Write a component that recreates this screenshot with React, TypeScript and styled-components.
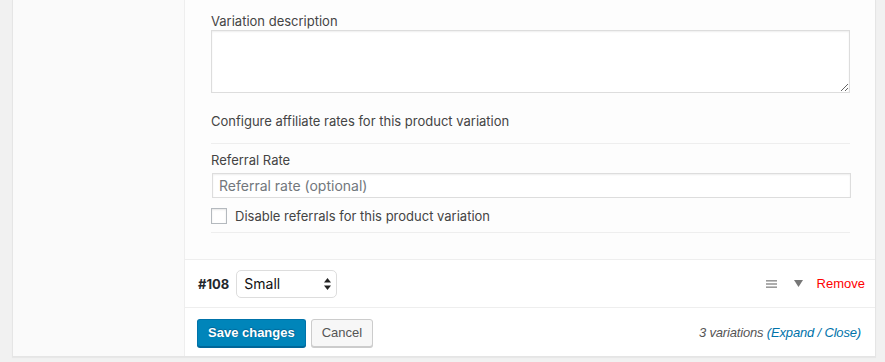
import styled, { createGlobalStyle } from "styled-components";

const GlobalStyle = createGlobalStyle`
  html, body {
    margin: 0;
    padding: 0;
    background: #f1f1f1;
  }
  body {
    font-family: Inter, "Liberation Sans", Arial, sans-serif;
    font-size: 13px;
    color: #444;
  }
  * {
    box-sizing: border-box;
  }
`;

const Page = styled.div`
  padding: 0 9px 6px 12px;
`;

const Panel = styled.div`
  display: flex;
  background: #fff;
  border: 1px solid #e5e5e5;
  border-top: none;
  box-shadow: 0 1px 1px rgba(0, 0, 0, 0.04);
`;

// left tab column of the product data box
const Sidebar = styled.div`
  width: 172px;
  flex-shrink: 0;
  background: #fafafa;
  border-right: 1px solid #eee;
`;

const Main = styled.div`
  flex: 1;
  display: flex;
  flex-direction: column;
`;

const VariationBody = styled.div`
  background: #fdfdfd;
  padding: 11px 25px 26px 26px;
  border-bottom: 1px solid #eee;
  display: flex;
  flex-direction: column;
`;

const FieldLabel = styled.div<{ $top?: number }>`
  line-height: 18px;
  padding-top: 1px;
  margin-top: ${(p) => p.$top ?? 0}px;
  margin-bottom: -1px;
  color: #444;
`;

const Description = styled.textarea`
  display: block;
  width: 100%;
  height: 63px;
  margin-top: 1px;
  border: 1px solid #ddd;
  box-shadow: inset 0 1px 2px rgba(0, 0, 0, 0.07);
  background: #fff;
  font-family: inherit;
  font-size: 14px;
  padding: 4px 6px;
  resize: both;
  outline: none;
`;

const Divider = styled.div<{ $top: number }>`
  height: 1px;
  background: #eee;
  margin-top: ${(p) => p.$top}px;
`;

const RateInput = styled.input`
  display: block;
  width: 100%;
  height: 25px;
  margin: 5px 0 0 1px;
  border: 1px solid #ddd;
  box-shadow: inset 0 1px 2px rgba(0, 0, 0, 0.07);
  background: #fff;
  font-family: inherit;
  font-size: 14px;
  padding: 0 6px;
  color: #32373c;
  outline: none;

  &::placeholder {
    color: #72777c;
  }
`;

const CheckRow = styled.label`
  display: flex;
  align-items: center;
  gap: 8px;
  margin-top: 10px;
  height: 16px;
  line-height: 16px;
  color: #444;
`;

const Check = styled.input`
  appearance: none;
  width: 16px;
  height: 16px;
  margin: 0;
  border: 1px solid #b4b9be;
  background: #fff;
  box-shadow: inset 0 1px 2px rgba(0, 0, 0, 0.1);
  flex-shrink: 0;
`;

const HeaderRow = styled.div`
  height: 48px;
  display: flex;
  align-items: center;
  padding: 0 10px 0 13px;
  background: #fff;
  border-bottom: 1px solid #eee;
`;

const Sku = styled.strong`
  font-weight: bold;
  color: #23282d;
  margin-right: 7px;
`;

const SelectWrap = styled.div`
  position: relative;
  width: 101px;
  height: 28px;
`;

const SizeSelect = styled.select`
  appearance: none;
  width: 100%;
  height: 100%;
  border: 1px solid #ddd;
  border-radius: 5px;
  background: #fff;
  font-family: inherit;
  font-size: 14px;
  color: #111;
  padding: 0 20px 0 7px;
  outline: none;
`;

const SelectArrows = styled.svg`
  position: absolute;
  right: 6px;
  top: 8px;
  pointer-events: none;
`;

const Spacer = styled.div`
  flex: 1;
`;

const Handle = styled.svg`
  margin-right: 17px;
`;

const Toggle = styled.svg`
  margin-right: 14px;
`;

const RemoveLink = styled.a`
  font-family: "Liberation Sans", Arial, sans-serif;
  color: #f00;
  text-decoration: none;
  cursor: pointer;
`;

const Footer = styled.div`
  height: 48px;
  display: flex;
  align-items: center;
  padding: 1px 14px 0 12px;
  background: #fff;
`;

const Button = styled.button<{ $primary?: boolean }>`
  height: 28px;
  padding: 0 10px;
  margin-right: 5px;
  border-radius: 3px;
  font-family: "Liberation Sans", Arial, sans-serif;
  font-size: 13px;
  cursor: pointer;
  border: 1px solid ${(p) => (p.$primary ? "#0073aa" : "#ccc")};
  border-bottom-color: ${(p) => (p.$primary ? "#006799" : "#ccc")};
  background: ${(p) => (p.$primary ? "#0085ba" : "#f7f7f7")};
  color: ${(p) => (p.$primary ? "#fff" : "#555")};
  font-weight: ${(p) => (p.$primary ? "bold" : "normal")};
  box-shadow: 0 1px 0 ${(p) => (p.$primary ? "#006799" : "#ccc")};
  text-shadow: ${(p) =>
    p.$primary ? "0 -1px 1px #006799, 1px 0 1px #006799" : "none"};
`;

const Count = styled.div`
  margin-left: auto;
  font-family: "Liberation Sans", Arial, sans-serif;
  font-style: italic;
  letter-spacing: -0.17px;
  color: #555;
`;

const CountLinks = styled.span`
  color: #0073aa;

  a {
    color: #0073aa;
    text-decoration: none;
  }
`;

const App = () => {
  return (
    <>
      <GlobalStyle />
      <Page>
        <Panel>
          <Sidebar />
          <Main>
            <VariationBody>
              <FieldLabel>Variation description</FieldLabel>
              <Description />
              <FieldLabel $top={18}>
                Configure affiliate rates for this product variation
              </FieldLabel>
              <Divider $top={14} />
              <FieldLabel $top={6}>Referral Rate</FieldLabel>
              <RateInput placeholder="Referral rate (optional)" />
              <CheckRow>
                <Check type="checkbox" />
                Disable referrals for this product variation
              </CheckRow>
              <Divider $top={8} />
            </VariationBody>

            <HeaderRow>
              <Sku>#108</Sku>
              <SelectWrap>
                <SizeSelect defaultValue="small">
                  <option value="small">Small</option>
                  <option value="medium">Medium</option>
                  <option value="large">Large</option>
                </SizeSelect>
                <SelectArrows width="7" height="12" viewBox="0 0 7 12">
                  <path d="M3.5 0 L7 4.5 L0 4.5 Z" fill="#222" />
                  <path d="M0 7.5 L7 7.5 L3.5 12 Z" fill="#222" />
                </SelectArrows>
              </SelectWrap>
              <Spacer />
              <Handle width="11" height="8" viewBox="0 0 11 8">
                <rect x="0" y="0" width="11" height="1.6" fill="#9a9a9a" />
                <rect x="0" y="3.2" width="11" height="1.6" fill="#9a9a9a" />
                <rect x="0" y="6.4" width="11" height="1.6" fill="#9a9a9a" />
              </Handle>
              <Toggle width="9" height="7" viewBox="0 0 9 7">
                <path d="M0 0 L9 0 L4.5 7 Z" fill="#777" />
              </Toggle>
              <RemoveLink>Remove</RemoveLink>
            </HeaderRow>

            <Footer>
              <Button $primary>Save changes</Button>
              <Button>Cancel</Button>
              <Count>
                3 variations{" "}
                <CountLinks>
                  (<a href="#">Expand</a> / <a href="#">Close</a>)
                </CountLinks>
              </Count>
            </Footer>
          </Main>
        </Panel>
      </Page>
    </>
  );
};

export default App;
